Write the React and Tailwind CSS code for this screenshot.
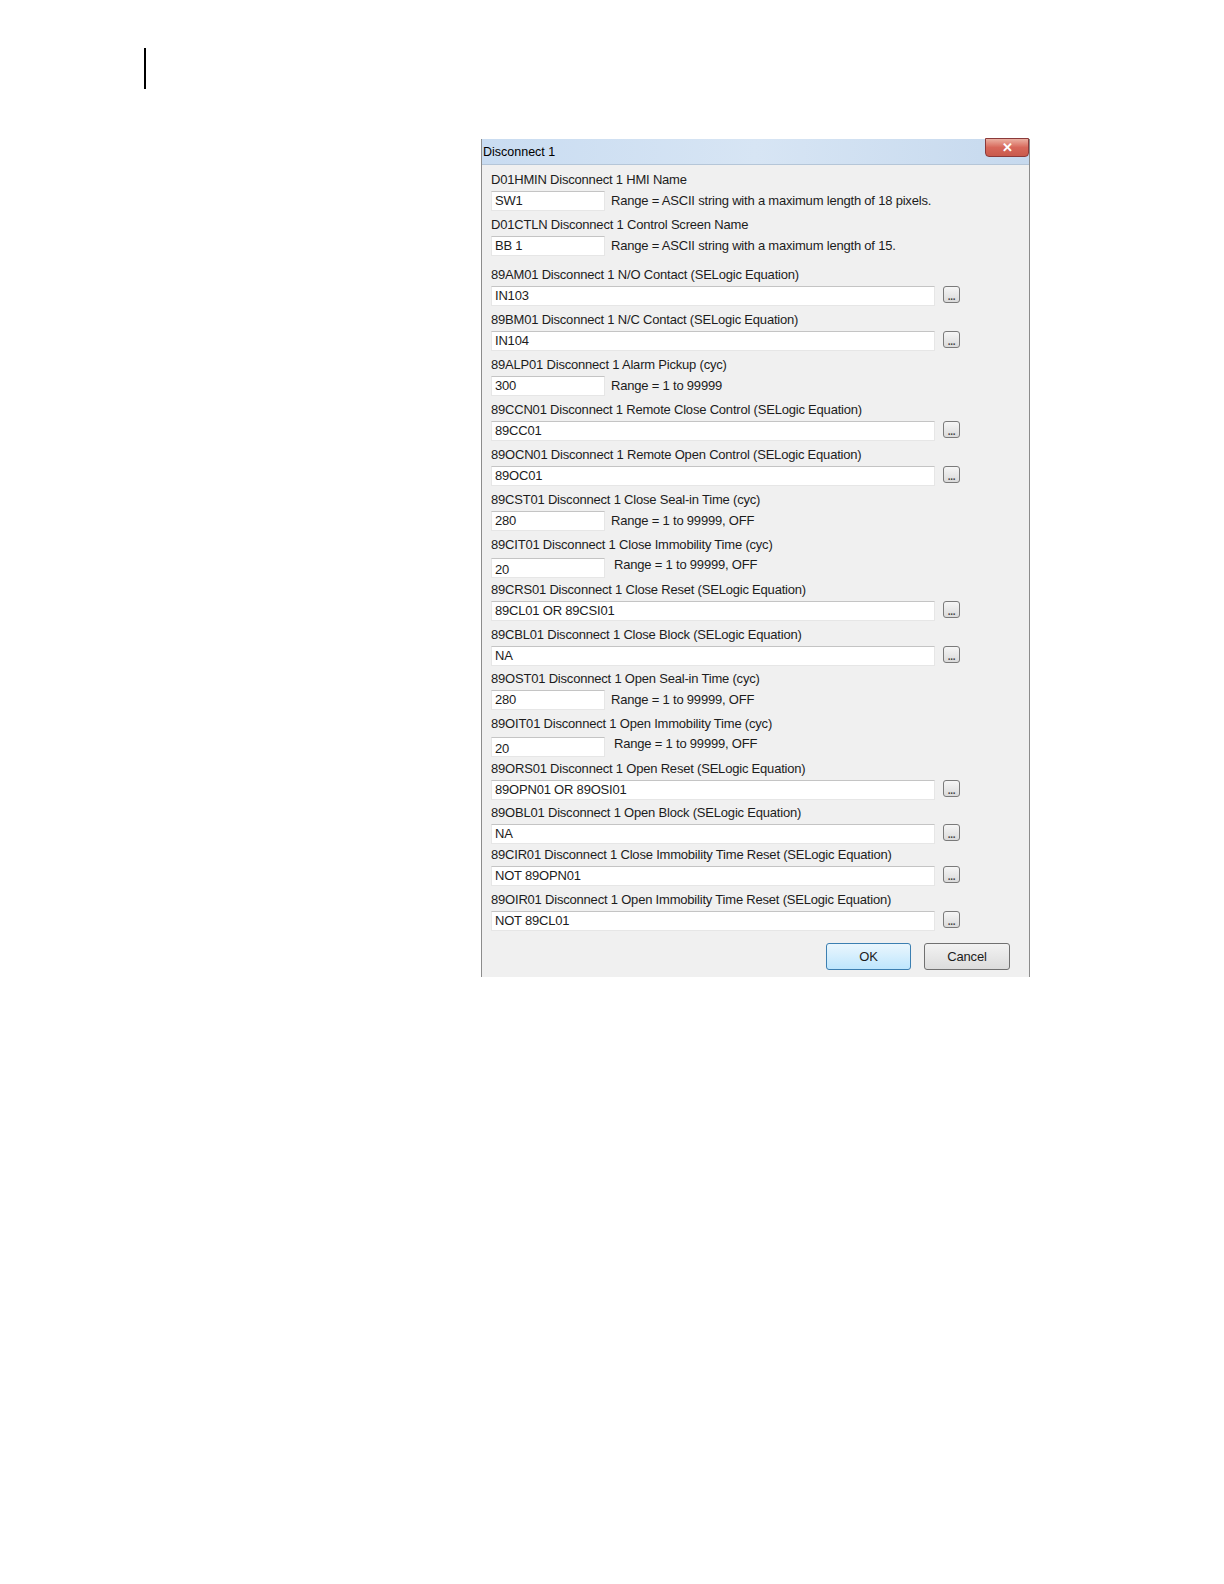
import React from "react";

const FIELDS = [
  { label: "D01HMIN Disconnect 1 HMI Name", value: "SW1", range: "Range = ASCII string with a maximum length of 18 pixels." },
  { label: "D01CTLN Disconnect 1 Control Screen Name", value: "BB 1", range: "Range = ASCII string with a maximum length of 15." },
  { label: "89AM01 Disconnect 1 N/O Contact (SELogic Equation)", value: "IN103", eq: true, top: "mt-[5px]" },
  { label: "89BM01 Disconnect 1 N/C Contact (SELogic Equation)", value: "IN104", eq: true },
  { label: "89ALP01 Disconnect 1 Alarm Pickup (cyc)", value: "300", range: "Range = 1 to 99999" },
  { label: "89CCN01 Disconnect 1 Remote Close Control (SELogic Equation)", value: "89CC01", eq: true },
  { label: "89OCN01 Disconnect 1 Remote Open Control (SELogic Equation)", value: "89OC01", eq: true },
  { label: "89CST01 Disconnect 1 Close Seal-in Time (cyc)", value: "280", range: "Range = 1 to 99999, OFF" },
  { label: "89CIT01 Disconnect 1 Close Immobility Time (cyc)", value: "20", range: "Range = 1 to 99999, OFF", low: true },
  { label: "89CRS01 Disconnect 1 Close Reset (SELogic Equation)", value: "89CL01 OR 89CSI01", eq: true },
  { label: "89CBL01 Disconnect 1 Close Block (SELogic Equation)", value: "NA", eq: true },
  { label: "89OST01 Disconnect 1 Open Seal-in Time (cyc)", value: "280", range: "Range = 1 to 99999, OFF", top: "-mt-[1px]" },
  { label: "89OIT01 Disconnect 1 Open Immobility Time (cyc)", value: "20", range: "Range = 1 to 99999, OFF", low: true },
  { label: "89ORS01 Disconnect 1 Open Reset (SELogic Equation)", value: "89OPN01 OR 89OSI01", eq: true },
  { label: "89OBL01 Disconnect 1 Open Block (SELogic Equation)", value: "NA", eq: true, top: "-mt-[1px]" },
  { label: "89CIR01 Disconnect 1 Close Immobility Time Reset (SELogic Equation)", value: "NOT 89OPN01", eq: true, top: "-mt-[3px]" },
  { label: "89OIR01 Disconnect 1 Open Immobility Time Reset (SELogic Equation)", value: "NOT 89CL01", eq: true },
];

function Ellipsis() {
  return (
    <div className="ml-[8px] w-[17px] h-[17px] rounded-[3px] border border-[#7a7a7a] bg-gradient-to-b from-[#f6f6f6] to-[#dadada] flex items-end justify-center pb-[2px]">
      <span className="text-[10px] leading-[6px] font-bold text-[#444]">...</span>
    </div>
  );
}

function Field({ f }) {
  return (
    <div className={f.top || ""}>
      <div className="h-[22px] flex items-center">{f.label}</div>
      <div className="h-[23px] flex items-start">
        <div
          className={
            "h-[20px] bg-white border border-[#e6e6e6] border-t-[#c4c4c4] flex items-center pl-[3px] " +
            (f.eq ? "w-[444px]" : "w-[114px]") +
            (f.low ? " mt-[2px] pt-[3px]" : "")
          }
        >
          {f.value}
        </div>
        {f.eq && <Ellipsis />}
        {f.range && <div className={"h-[20px] flex items-center " + (f.low ? "ml-[9px] -mt-[1px]" : "ml-[6px]")}>{f.range}</div>}
      </div>
    </div>
  );
}

export default function App() {
  return (
    <div className="w-[1224px] h-[1584px] bg-white font-['Liberation_Sans',Arial,sans-serif] text-[#1c1c1c]">
      <div className="h-[48px]" />
      <div className="ml-[144px] w-[2px] h-[41px] bg-black" />
      <div className="ml-[481px] mt-[50px] w-[549px] h-[838px] bg-[#f0f0f0] border-l border-r border-[#8c8c8c] flex flex-col">
        <div className="h-[26px] bg-gradient-to-r from-[#c9dcf1] via-[#d7e5f4] to-[#c6d9ee] flex items-center justify-between border-b border-[#b5c6d8]">
          <span className="ml-[1px] mt-[2px] text-[12.5px] text-black">Disconnect 1</span>
          <div className="self-start -mt-[1px] w-[44px] h-[19px] rounded-b-[4px] border border-[#8b3a3a] bg-gradient-to-b from-[#eab0a2] via-[#d7675a] to-[#c95a4c] flex items-center justify-center">
            <span className="text-white text-[13px] font-bold leading-none">✕</span>
          </div>
        </div>
        <div className="pl-[9px] pt-[4px] text-[13px] tracking-[-0.2px]">
          {FIELDS.map((f, i) => (
            <Field key={i} f={f} />
          ))}
          <div className="flex justify-end pr-[19px] mt-[9px]">
            <button className="w-[85px] h-[27px] rounded-[3px] border border-[#3c7fb1] bg-gradient-to-b from-[#eaf6fd] to-[#bee6fd] text-[13px] text-[#1c1c1c]">
              OK
            </button>
            <button className="ml-[13px] w-[86px] h-[27px] rounded-[3px] border border-[#707070] bg-gradient-to-b from-[#f2f2f2] to-[#dcdcdc] text-[13px] text-[#1c1c1c]">
              Cancel
            </button>
          </div>
        </div>
      </div>
    </div>
  );
}
